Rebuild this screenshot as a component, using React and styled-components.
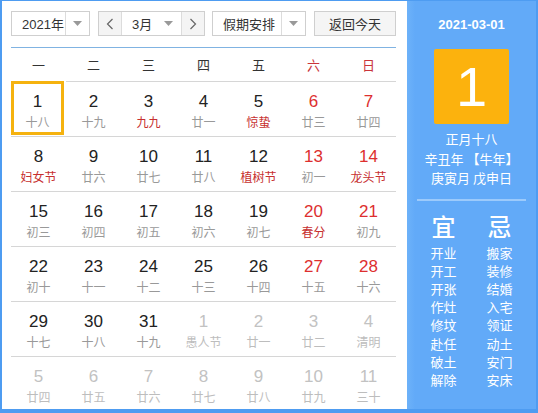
import React from "react";
import { styled, createGlobalStyle } from "styled-components";

const GlobalStyle = createGlobalStyle`
  html, body {
    margin: 0;
    padding: 0;
    background: #fff;
  }
  body {
    font-family: "Liberation Sans", "Noto Sans CJK SC", Arial, sans-serif;
  }
  * { box-sizing: border-box; }
`;

const weekNames = ["一", "二", "三", "四", "五", "六", "日"];

// type: "" normal, "fest" red lunar text, "other" other month
const days = [
  [1, "十八"], [2, "十九"], [3, "九九", "fest"], [4, "廿一"], [5, "惊蛰", "fest"], [6, "廿三"], [7, "廿四"],
  [8, "妇女节", "fest"], [9, "廿六"], [10, "廿七"], [11, "廿八"], [12, "植树节", "fest"], [13, "初一"], [14, "龙头节", "fest"],
  [15, "初三"], [16, "初四"], [17, "初五"], [18, "初六"], [19, "初七"], [20, "春分", "fest"], [21, "初九"],
  [22, "初十"], [23, "十一"], [24, "十二"], [25, "十三"], [26, "十四"], [27, "十五"], [28, "十六"],
  [29, "十七"], [30, "十八"], [31, "十九"], [1, "愚人节", "other"], [2, "廿一", "other"], [3, "廿二", "other"], [4, "清明", "other"],
  [5, "廿四", "other"], [6, "廿五", "other"], [7, "廿六", "other"], [8, "廿七", "other"], [9, "廿八", "other"], [10, "廿九", "other"], [11, "三十", "other"],
];

const yi = ["开业", "开工", "开张", "作灶", "修坟", "赴任", "破土", "解除"];
const ji = ["搬家", "装修", "结婚", "入宅", "领证", "动土", "安门", "安床"];

const Arrow = () => (
  <svg width="9" height="5" viewBox="0 0 9 5">
    <path d="M0 0 L9 0 L4.5 5 Z" fill="#999" />
  </svg>
);

const Chevron = ({ dir }) => (
  <svg width="8" height="12" viewBox="0 0 8 12">
    <path
      d={dir === "left" ? "M6.5 1 L1.5 6 L6.5 11" : "M1.5 1 L6.5 6 L1.5 11"}
      fill="none"
      stroke="#666"
      strokeWidth="1.2"
    />
  </svg>
);

const App = () => {
  return (
    <>
      <GlobalStyle />
      <Frame>
        <Main>
          <Toolbar>
            <Select $w={79}>
              <SelectText>2021年</SelectText>
              <SelectArrow>
                <Arrow />
              </SelectArrow>
            </Select>
            <MonthGroup>
              <NavButton>
                <Chevron dir="left" />
              </NavButton>
              <MonthSelect>
                <span>3月</span>
                <Arrow />
              </MonthSelect>
              <NavButton $right>
                <Chevron dir="right" />
              </NavButton>
            </MonthGroup>
            <Select $w={94}>
              <SelectText>假期安排</SelectText>
              <SelectArrow>
                <Arrow />
              </SelectArrow>
            </Select>
            <TodayButton>返回今天</TodayButton>
          </Toolbar>
          <Calendar>
            <Header>
              {weekNames.map((w, i) => (
                <HeadCell key={w} $weekend={i > 4}>
                  {w}
                </HeadCell>
              ))}
            </Header>
            <Grid>
              {days.map(([n, lunar, type], i) => {
                const weekend = i % 7 > 4;
                return (
                  <Cell key={i} $selected={i === 0}>
                    <DayNum $other={type === "other"} $weekend={weekend}>
                      {n}
                    </DayNum>
                    <Lunar $fest={type === "fest"} $other={type === "other"}>
                      {lunar}
                    </Lunar>
                  </Cell>
                );
              })}
            </Grid>
          </Calendar>
        </Main>
        <Side>
          <DateTitle>2021-03-01</DateTitle>
          <BigDay>1</BigDay>
          <LunarInfo>
            <div>正月十八</div>
            <div>辛丑年 【牛年】</div>
            <div>庚寅月 戊申日</div>
          </LunarInfo>
          <Divider />
          <Almanac>
            <AlmanacCol>
              <AlmanacHead>宜</AlmanacHead>
              {yi.map((t) => (
                <AlmanacItem key={t}>{t}</AlmanacItem>
              ))}
            </AlmanacCol>
            <AlmanacCol>
              <AlmanacHead>忌</AlmanacHead>
              {ji.map((t) => (
                <AlmanacItem key={t}>{t}</AlmanacItem>
              ))}
            </AlmanacCol>
          </Almanac>
        </Side>
      </Frame>
    </>
  );
};

export default App;

const Frame = styled.div`
  width: 538px;
  height: 413px;
  border-style: solid;
  border-color: #4e9cf1;
  border-width: 1px 2px 4px 2px;
  display: flex;
  overflow: hidden;
  background: #fff;
`;

const Main = styled.div`
  width: 405px;
  padding: 10px 0 0 9px;
  overflow: hidden;
`;

const Toolbar = styled.div`
  display: flex;
  align-items: center;
  height: 25px;
  width: 385px;
  margin-bottom: 11px;
`;

const Select = styled.div`
  width: ${(p) => p.$w}px;
  height: 25px;
  border: 1px solid #cfcfcf;
  display: flex;
  align-items: stretch;
  margin-right: 8px;
  background: #fff;
  font-family: "Noto Sans CJK SC", "Liberation Sans", sans-serif;
  font-size: 13px;
  color: #333;
`;

const SelectText = styled.div`
  flex: 1;
  display: flex;
  align-items: center;
  padding-left: 10px;
  font-family: "Liberation Sans", "Noto Sans CJK SC", sans-serif;
`;

const SelectArrow = styled.div`
  width: 24px;
  border-left: 1px solid #dcdcdc;
  display: flex;
  align-items: center;
  justify-content: center;
`;

const MonthGroup = styled.div`
  width: 107px;
  height: 25px;
  border: 1px solid #cfcfcf;
  display: flex;
  margin-right: 7px;
`;

const NavButton = styled.div`
  width: 23px;
  background: #f4f4f4;
  display: flex;
  align-items: center;
  justify-content: center;
  border-right: ${(p) => (p.$right ? "none" : "1px solid #dcdcdc")};
  border-left: ${(p) => (p.$right ? "1px solid #dcdcdc" : "none")};
`;

const MonthSelect = styled.div`
  flex: 1;
  display: flex;
  align-items: center;
  justify-content: space-between;
  padding: 0 8px 0 10px;
  font-family: "Liberation Sans", "Noto Sans CJK SC", sans-serif;
  font-size: 13px;
  color: #333;
`;

const TodayButton = styled.div`
  width: 82px;
  height: 25px;
  border: 1px solid #cfcfcf;
  background: #f5f5f5;
  display: flex;
  align-items: center;
  justify-content: center;
  font-family: "Noto Sans CJK SC", sans-serif;
  font-size: 13px;
  color: #333;
`;

const Calendar = styled.div`
  width: 385px;
  border-top: 1px solid #80b3e2;
`;

const Header = styled.div`
  display: grid;
  grid-template-columns: repeat(7, 55px);
  height: 33px;
  align-items: center;
`;

const HeadCell = styled.div`
  text-align: center;
  font-family: "Noto Sans CJK SC", sans-serif;
  font-size: 13px;
  color: ${(p) => (p.$weekend ? "#c9343a" : "#333")};
`;

const Grid = styled.div`
  display: grid;
  grid-template-columns: repeat(7, 55px);
  grid-auto-rows: 55px;
`;

const Cell = styled.div`
  border-top: 1px solid #d6d6d6;
  display: flex;
  flex-direction: column;
  align-items: center;
  padding-top: ${(p) => (p.$selected ? "8px" : "10px")};
  ${(p) =>
    p.$selected &&
    `
    border: 3px solid #f5b20f;
    width: 53px;
    height: 54px;
  `}
`;

const DayNum = styled.div`
  font-size: 17px;
  line-height: 20px;
  color: ${(p) => (p.$other ? "#c2c2c2" : p.$weekend ? "#dd2f2f" : "#222")};
`;

const Lunar = styled.div`
  margin-top: 1px;
  font-family: "Noto Sans CJK SC", sans-serif;
  font-size: 12px;
  line-height: 17px;
  color: ${(p) => (p.$fest ? "#c7302f" : p.$other ? "#bdbdbd" : "#999")};
`;

const Side = styled.div`
  flex: 1;
  background: linear-gradient(90deg, #6db2f9 0, #62aaf8 8px, #62aaf8 100%);
  display: flex;
  flex-direction: column;
  align-items: center;
  color: #fff;
  font-family: "Noto Sans CJK SC", sans-serif;
`;

const DateTitle = styled.div`
  margin-top: 16px;
  font-family: "Liberation Sans", sans-serif;
  font-size: 13px;
  font-weight: bold;
  line-height: 16px;
`;

const BigDay = styled.div`
  margin-top: 16px;
  width: 75px;
  height: 75px;
  background: #fcb20d;
  border-radius: 2px;
  display: flex;
  align-items: center;
  justify-content: center;
  font-family: "Liberation Sans", sans-serif;
  font-size: 56px;
  color: #fff;
`;

const LunarInfo = styled.div`
  margin-top: 5px;
  text-align: center;
  font-size: 13px;
  line-height: 19.5px;
`;

const Divider = styled.div`
  margin-top: 11px;
  width: 109px;
  height: 2px;
  background: #9ccafb;
`;

const Almanac = styled.div`
  margin-top: 11px;
  display: flex;
  gap: 30px;
`;

const AlmanacCol = styled.div`
  display: flex;
  flex-direction: column;
  align-items: center;
`;

const AlmanacHead = styled.div`
  font-size: 24px;
  line-height: 28px;
  font-weight: 500;
  margin-bottom: 4px;
`;

const AlmanacItem = styled.div`
  font-size: 13px;
  line-height: 18.2px;
`;
